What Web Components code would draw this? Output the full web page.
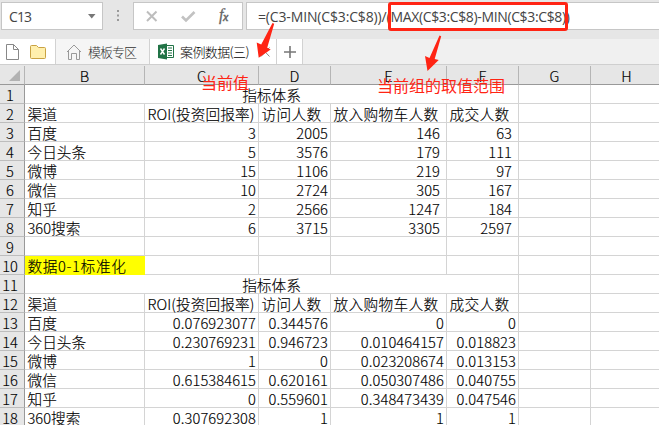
<!DOCTYPE html>
<html lang="zh-CN"><head><meta charset="utf-8"><title>案例数据</title>
<style>html,body{margin:0;width:659px;height:425px;overflow:hidden;background:#e6e6e6}</style></head>
<body><sheet-app></sheet-app>
<script>
const FONT='"Noto Sans CJK SC",sans-serif';
const def=(name,setup)=>customElements.define(name,class extends HTMLElement{
  connectedCallback(){ if(this.shadowRoot)return; this.attachShadow({mode:'open'}); setup(this,this.shadowRoot); }
});

// Text whose letter spacing is adjusted so that it spans the width in its "w" attribute.
def('fit-text',(el,root)=>{
  root.innerHTML='<style>:host{display:inline-block;white-space:pre}span{display:inline-block}</style><span></span>';
  const s=root.querySelector('span'), t=el.getAttribute('t'), w=+el.getAttribute('w');
  s.textContent=t;
  if(w){const n=s.getBoundingClientRect().width; s.style.letterSpacing=((w-n)/t.length)+'px';}
});

def('formula-bar',(el,root)=>{
  root.innerHTML=`<style>
  :host{display:flex;height:39px;box-sizing:border-box;padding:2px 0 9px 1px;background:#e6e6e6;font:14px/25px "Open Sans",sans-serif;color:#444}
  .box{box-sizing:border-box;border:1px solid #c6c6c6;background:#fff;height:28px;display:flex;align-items:center}
  .name{width:102px;padding:0 6px 0 7px;justify-content:space-between}
  .dots{width:30px;display:flex;align-items:center;justify-content:center}
  .btns{width:110px}.f{flex:1;margin-left:3px;padding-left:11px;border-right:0}
  </style>
  <div class="box name"><fit-text t="C13" w="22"></fit-text><svg width="8" height="5"><path d="M0 0h7.5L3.75 4.5z" fill="#777"/></svg></div>
  <div class="dots"><svg width="3" height="12"><path d="M0 1h2M0 5.500h2M0 10h2" stroke="#999" stroke-width="2"/></svg></div>
  <div class="box btns"><svg width="108" height="26" fill="none">
   <path d="M13 8.500l9.500 9.500M22.500 8.500L13 18" stroke="#bdbdbd" stroke-width="2"/>
   <path d="M48 13.500l4 4 8.500-8.500" stroke="#c2c2c2" stroke-width="2.6"/>
   <text x="85" y="17" fill="#666" stroke="#666" stroke-width=".3" font-family="Liberation Serif" font-style="italic" font-size="16">f</text>
   <text x="89" y="18" fill="#666" stroke="#666" stroke-width=".5" font-family="Liberation Serif" font-style="italic" font-size="12">x</text></svg></div>
  <div class="box f"><fit-text t="=(C3-MIN(C$3:C$8))/(" w="132.500"></fit-text><fit-text t="MAX(C$3:C$8)-MIN(C$3:C$8))" w="179"></fit-text></div>`;
});

def('tab-strip',(el,root)=>{
  root.innerHTML=`<style>
  :host{display:flex;height:26px;box-sizing:border-box;border-bottom:1px solid #cfcfcf;background:#f0f0f0;font:300 13px/25px ${FONT};color:#333}
  div{height:25px;box-sizing:border-box;display:flex;align-items:center;border-right:1px solid #d2d2d2}
  .files{width:56px;background:#fff}.a{width:94px;background:#f5f5f5}.b{width:127px;background:#fff;color:#000}.plus{width:26px;background:#fff}
  svg{display:block;flex:none}
  </style>
  <div class="files"><svg width="55" height="25" fill="none"><path d="M6.500 5.500h7l5 5v10h-12zM13.500 5.500v5h5" stroke="#888"/><path d="M30.500 18.500v-11q0-1 1-1h5l2 2h6q1 0 1 1v9q0 1-1 1h-13q-1 0-1-1z" fill="#ffefad" stroke="#c9a243"/></svg></div>
  <div class="a"><svg width="32" height="25" fill="none" stroke="#999"><path d="M11 13l7-7 7 7M12.500 12v8.500h3v-6h5v6h3V12"/></svg><fit-text t="模板专区" w="48"></fit-text></div>
  <div class="b"><svg width="30" height="25"><path d="M17 6.500h6.500v12H17" fill="#fff" stroke="#217346"/><path d="M18 9h4M18 11.500h4M18 14h4M18 16.500h4" stroke="#217346" stroke-width="1.2"/><path d="M8 6l9-1.500v16L8 19z" fill="#217346"/><path d="M10.500 9.500l4 6M14.500 9.500l-4 6" stroke="#fff" stroke-width="1.4"/></svg><fit-text t="案例数据(三)" w="69"></fit-text><svg width="22" height="25"><path d="M12 8.500l8.500 9M20.500 8.500l-8.500 9" stroke="#888"/></svg></div>
  <div class="plus"><svg width="25" height="25"><path d="M7 13h12M13 7v12" stroke="#777" stroke-width="1.6"/></svg></div>`;
});

def('sheet-grid',(el,root)=>{
  const names=['百度','今日头条','微博','微信','知乎','360搜索'];
  const head=['渠道',['ROI(投资回报率)',107],['访问人数',60],['放入购物车人数',105],['成交人数',60]];
  const raw=[[3,2005,146,63],[5,3576,179,111],[15,1106,219,97],[10,2724,305,167],[2,2566,1247,184],[6,3715,3305,2597]];
  const norm=[['0.076923077','0.344576','0','0'],['0.230769231','0.946723','0.010464157','0.018823'],['1','0','0.023208674','0.013153'],['0.615384615','0.620161','0.050307486','0.040755'],['0','0.559601','0.348473439','0.047546'],['0.307692308','1','1','1']];
  const num=v=>{v=String(v);return `<fit-text t="${v}" w="${(v.replace('.','').length*7.92+(v.includes('.')?4:0)).toFixed(2)}"></fit-text>`};
  const txt=v=>Array.isArray(v)?`<fit-text t="${v[0]}" w="${v[1]}"></fit-text>`:v;
  const blank=n=>'<i></i>'.repeat(n);
  let h='<b class="corner"><svg width="12" height="12"><path d="M11 0v11H0z" fill="#b2b2b2"/></svg></b>'+[...'BCDEFGH'].map(c=>`<b class="col">${c}</b>`).join('');
  for(let r=1;r<=18;r++){
    h+=`<b class="row">${r}</b>`;
    if(r==1||r==11) h+='<i class="merge">指标体系</i>';
    else if(r==2||r==12) h+=head.map(v=>`<i>${txt(v)}</i>`).join('');
    else if(r==9) h+=blank(5);
    else if(r==10) h+='<i class="mark"><fit-text t="数据0-1标准化" w="99"></fit-text></i>'+blank(4);
    else{const k=r<9?r-3:r-13,d=r<9?raw:norm;
      h+=`<i>${names[k]}</i>`+d[k].map((v,c)=>`<i class="num${r<9&&c>1?' inset':''}">${num(v)}</i>`).join('');}
    h+=blank(2);
  }
  root.innerHTML=`<style>
  :host{display:grid;grid-template-columns:25px 120px 114px 72px 116px 72px 72px 72px;grid-template-rows:19px repeat(18,19px);margin-top:1px;background:#fff;font:300 14.67px/20px ${FONT};color:#000}
  i,b{font-style:normal;font-weight:300;box-sizing:border-box;border-right:1px solid #d4d4d4;border-bottom:1px solid #d4d4d4;white-space:nowrap;padding-left:2.5px;line-height:20px;height:19px;-webkit-text-stroke:.15px #000}
  b{background:#e6e6e6;text-align:center;padding:0;color:#000}
  .col{border-right-color:#b5b5b5;border-bottom-color:#999}
  .row{border-right-color:#999;border-bottom-color:#bdbdbd;padding-right:4px}
  .corner{border-right-color:#b5b5b5;border-bottom-color:#999;display:flex;justify-content:flex-end;padding:4px 3px 0 0}
  .merge{grid-column:span 5;text-align:center;padding:0}
  .mark{background:#ff0;border-color:#ff0}
  .num{text-align:right;padding:0 2px 0 0}.inset{padding-right:6px}
  </style>${h}`;
});

def('red-notes',(el,root)=>{
  root.innerHTML=`<style>:host{position:absolute;inset:0;pointer-events:none;color:#ff2414;font:400 16px/20px ${FONT}}
  svg,.n{position:absolute}svg{left:0;top:0}</style>
  <svg width="659" height="425"><rect x="389.500" y="3.500" width="177" height="26" rx="1.5" fill="none" stroke="#ff2414" stroke-width="3"/>
  <g fill="#ff2414"><path d="M272.500 23l1.700 .7-7 24 3.500 1.800L258.700 57.800l-2-15.300 4.500 2z"/><path d="M439.500 35.500l1.700 .7-6.500 22.800 4 1L427.500 71l-2.500-15 4.500 2z"/></g></svg>
  <fit-text class="n" style="left:201px;top:72px" t="当前值" w="48"></fit-text>
  <fit-text class="n" style="left:377px;top:75px" t="当前组的取值范围" w="128"></fit-text>`;
});

def('sheet-app',(el,root)=>{
  root.innerHTML=`<style>:host{display:block;position:relative;width:659px;height:425px;overflow:hidden}</style>
  <formula-bar></formula-bar><tab-strip></tab-strip><sheet-grid></sheet-grid><red-notes></red-notes>`;
});
</script></body></html>
